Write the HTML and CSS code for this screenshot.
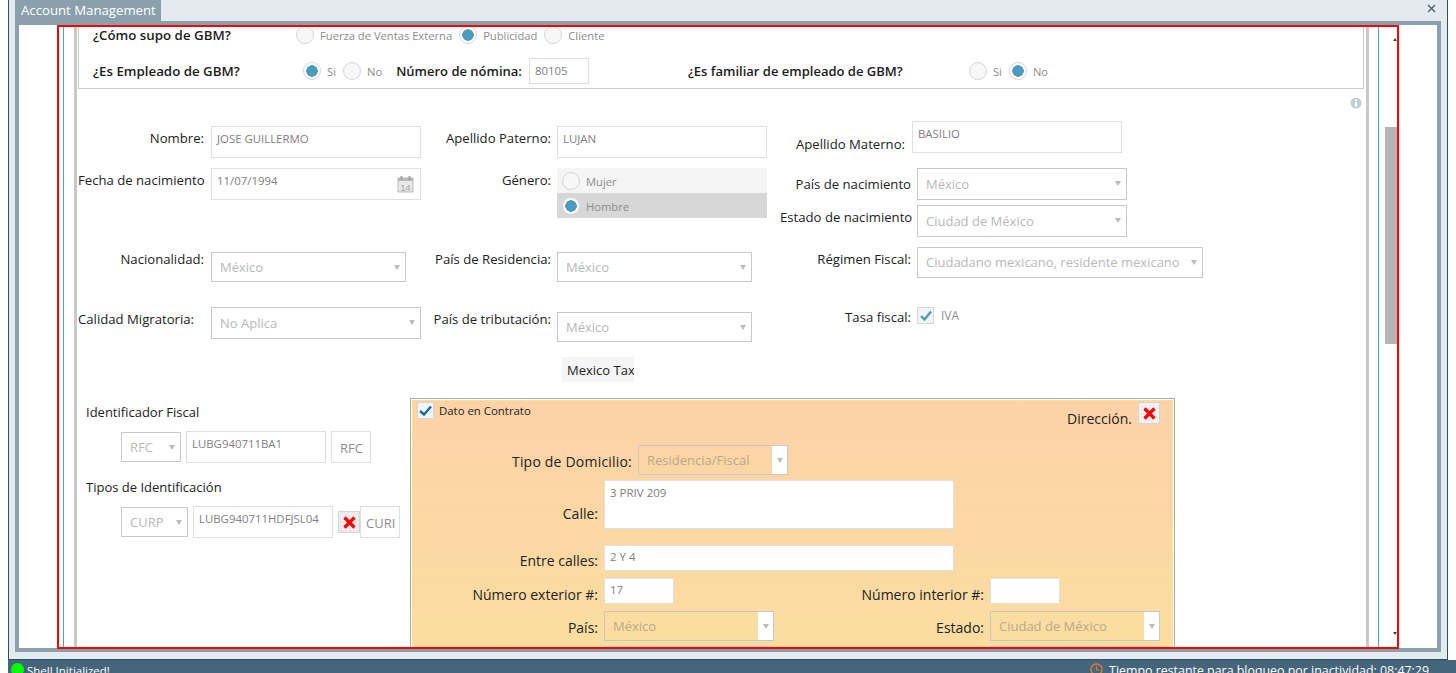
FILE: index.html
```html
<!DOCTYPE html>
<html lang="es">
<head>
    <meta charset="UTF-8">
    <title>Account Management</title>
    <link rel="stylesheet" href="styles.css">
</head>
<body>
    <div class="window">
        <div class="red-box"></div>
        <div class="tabbar">
            <div class="tab">Account Management</div>
            <svg class="close" width="9" height="9" viewBox="0 0 9 9"><path d="M1 1l7 7M8 1l-7 7" stroke="#3f6072" stroke-width="1.3" fill="none"/></svg>
        </div>
        <div class="frame">
            <div class="viewport">
                <div class="blue-box">
                    <div class="gray-box">
                        <div class="survey">
                            <div class="survey-row first">
                                <b class="q q1">¿Cómo supo de GBM?</b>
                                <span class="radio"></span><span class="opt">Fuerza de Ventas Externa</span>
                                <span class="radio on"></span><span class="opt">Publicidad</span>
                                <span class="radio"></span><span class="opt">Cliente</span>
                            </div>
                            <div class="survey-row second">
                                <b class="q q2">¿Es Empleado de GBM?</b>
                                <span class="radio on"></span><span class="opt">Si</span>
                                <span class="radio"></span><span class="opt">No</span>
                                <b class="q nomina">Número de nómina:</b>
                                <span class="input nomina-input">80105</span>
                                <b class="q familiar">¿Es familiar de empleado de GBM?</b>
                                <span class="radio"></span><span class="opt">Si</span>
                                <span class="radio on"></span><span class="opt">No</span>
                            </div>
                        </div>

                        <div class="info-row">
                            <svg width="12" height="12" viewBox="0 0 12 12"><circle cx="6" cy="6" r="5.5" fill="#c3ccd4"/><rect x="5" y="5" width="2" height="4.5" fill="#fff"/><rect x="5" y="2.5" width="2" height="1.6" fill="#fff"/></svg>
                        </div>

                        <div class="form-row row-a">
                            <div class="field col1 mt5">
                                <label class="lbl top">Nombre:</label>
                                <span class="input w210 h32">JOSE GUILLERMO</span>
                            </div>
                            <div class="field col2 mt5">
                                <label class="lbl top">Apellido Paterno:</label>
                                <span class="input w210 h32">LUJAN</span>
                            </div>
                            <div class="field col3">
                                <label class="lbl lbl-low">Apellido Materno:</label>
                                <span class="input w210 h32 materno">BASILIO</span>
                            </div>
                        </div>

                        <div class="form-row row-b">
                            <div class="field col1">
                                <label class="lbl top">Fecha de nacimiento</label>
                                <span class="input w210 h32 date">11/07/1994
                                    <svg class="cal" width="17" height="18" viewBox="0 0 17 18"><path d="M1 3h15v14H1z" fill="#e8e8e8" stroke="#b9b9b9"/><path d="M1 3h15v3H1z" fill="#b9b9b9"/><path d="M4.5 1v4M12.5 1v4" stroke="#a5a5a5" stroke-width="2"/><text x="8.5" y="15.5" text-anchor="middle" class="cal-num">14</text></svg>
                                </span>
                            </div>
                            <div class="field col2">
                                <label class="lbl top">Género:</label>
                                <div class="gender">
                                    <div class="gender-opt"><span class="radio"></span><span class="opt">Mujer</span></div>
                                    <div class="gender-opt sel"><span class="radio on"></span><span class="opt">Hombre</span></div>
                                </div>
                            </div>
                            <div class="col3 stack">
                                <div class="field">
                                    <label class="lbl mid">País de nacimiento</label>
                                    <span class="select w210 h32">México</span>
                                </div>
                                <div class="field">
                                    <label class="lbl top">Estado de nacimiento</label>
                                    <span class="select w210 h32">Ciudad de México</span>
                                </div>
                            </div>
                        </div>

                        <div class="form-row row-c">
                            <div class="field col1 mt5">
                                <label class="lbl up">Nacionalidad:</label>
                                <span class="select w195 h30">México</span>
                            </div>
                            <div class="field col2 mt5">
                                <label class="lbl up">País de Residencia:</label>
                                <span class="select w195 h30">México</span>
                            </div>
                            <div class="field col3">
                                <label class="lbl top">Régimen Fiscal:</label>
                                <span class="select w286 h31">Ciudadano mexicano, residente mexicano</span>
                            </div>
                        </div>

                        <div class="form-row row-d">
                            <div class="field col1">
                                <label class="lbl top left">Calidad Migratoria:</label>
                                <span class="select w210 h32">No Aplica</span>
                            </div>
                            <div class="field col2 mt5">
                                <label class="lbl up">País de tributación:</label>
                                <span class="select w195 h30">México</span>
                            </div>
                            <div class="field col3">
                                <label class="lbl tasa">Tasa fiscal:</label>
                                <span class="check">
                                    <svg width="12" height="11" viewBox="0 0 12 11"><path d="M1 6l3.5 3.5L11 1.5" stroke="#4b9cc0" stroke-width="2.4" fill="none"/></svg>
                                </span>
                                <span class="opt iva">IVA</span>
                            </div>
                        </div>

                        <div class="tax-row"><span class="tax">Mexico Tax</span></div>

                        <div class="bottom">
                            <div class="ids">
                                <div class="ids-title">Identificador Fiscal</div>
                                <div class="ids-row">
                                    <span class="select w60 h30 small">RFC</span>
                                    <span class="input w140 h32">LUBG940711BA1</span>
                                    <span class="id-btn">RFC</span>
                                </div>
                                <div class="ids-title t2">Tipos de Identificación</div>
                                <div class="ids-row">
                                    <span class="select w67 h30 small">CURP</span>
                                    <span class="input w140 h32">LUBG940711HDFJSL04</span>
                                    <span class="x-btn">
                                        <svg width="13" height="13" viewBox="0 0 13 13"><path d="M1.5 1.5l10 10M11.5 1.5l-10 10" stroke="#f00" stroke-width="3.2" fill="none"/></svg>
                                    </span>
                                    <span class="id-btn cut">CURI</span>
                                </div>
                            </div>

                            <div class="address">
                                <div class="address-inner">
                                    <div class="addr-head">
                                        <span class="contract">
                                            <span class="check dark">
                                                <svg width="13" height="11" viewBox="0 0 13 11"><path d="M1 6l4 3.5L12 1.5" stroke="#136f9f" stroke-width="2.4" fill="none"/></svg>
                                            </span>
                                            Dato en Contrato
                                        </span>
                                        <span class="addr-title">Dirección.</span>
                                        <span class="x-btn light">
                                            <svg width="13" height="13" viewBox="0 0 13 13"><path d="M1.5 1.5l10 10M11.5 1.5l-10 10" stroke="#f00" stroke-width="3.2" fill="none"/></svg>
                                        </span>
                                    </div>
                                    <div class="addr-row tipo">
                                        <label class="addr-lbl wide">Tipo de Domicilio:</label>
                                        <span class="addr-select w150">Residencia/Fiscal</span>
                                    </div>
                                    <div class="addr-row calle">
                                        <label class="addr-lbl">Calle:</label>
                                        <span class="addr-input w350 h49">3 PRIV 209</span>
                                    </div>
                                    <div class="addr-row entre">
                                        <label class="addr-lbl">Entre calles:</label>
                                        <span class="addr-input w350 h26">2 Y 4</span>
                                    </div>
                                    <div class="addr-row numero">
                                        <label class="addr-lbl">Número exterior #:</label>
                                        <span class="addr-input w70 h26">17</span>
                                        <label class="addr-lbl second">Número interior #:</label>
                                        <span class="addr-input w70 h26"></span>
                                    </div>
                                    <div class="addr-row pais">
                                        <label class="addr-lbl">País:</label>
                                        <span class="addr-select w170">México</span>
                                        <label class="addr-lbl second s2">Estado:</label>
                                        <span class="addr-select w170">Ciudad de México</span>
                                    </div>
                                    <div class="addr-row next">
                                        <span class="addr-select w170 offset"></span>
                                        <span class="addr-select w170 offset2"></span>
                                    </div>
                                </div>
                            </div>
                        </div>
                    </div>
                </div>
                <div class="scrollbar">
                    <span class="arrow up"></span>
                    <span class="thumb"></span>
                    <span class="arrow down"></span>
                </div>
            </div>
        </div>
    </div>
    <div class="statusbar">
        <span class="led"></span>
        <span class="status-text">Shell Initialized!</span>
        <span class="timer">
            <svg width="13" height="13" viewBox="0 0 13 13"><circle cx="6.5" cy="6.5" r="5.5" fill="none" stroke="#e07b30" stroke-width="1.4"/><path d="M6.5 3v4h3" fill="none" stroke="#e07b30" stroke-width="1.2"/></svg>
            Tiempo restante para bloqueo por inactividad: 08:47:29
        </span>
    </div>
</body>
</html>
```

FILE: styles.css
```css
* {
    box-sizing: border-box;
}

html, body {
    margin: 0;
    height: 673px;
    overflow: hidden;
    background-color: #fff;
    font-family: "Open Sans", "Noto Sans", sans-serif;
    font-size: 12px;
    color: #222;
}

/* window chrome */
.window {
    position: relative;
    margin-left: 8px;
    width: 1440px;
    height: 660px;
    padding: 0 6px 7px 6px;
    background-color: #e3eaf0;
    border-left: 1px solid #2f4f60;
    border-right: 1px solid #2f4f60;
    border-bottom: 1px solid #2f4f60;
    display: flex;
    flex-direction: column;
}

.tabbar {
    height: 21px;
    flex: none;
    display: flex;
    justify-content: space-between;
    align-items: flex-start;
}

.tab {
    width: 146px;
    height: 21px;
    background-color: #8aa0ad;
    color: #fff;
    font-size: 13.2px;
    line-height: 21px;
    padding-left: 6px;
    white-space: nowrap;
}

.close {
    margin: 4px 5px 0 0;
}

.frame {
    flex: 1;
    border: 4px solid #8aa0ad;
    background-color: #fff;
    overflow: hidden;
    min-height: 0;
}

.red-box {
    position: absolute;
    left: 48px;
    top: 25px;
    width: 1342px;
    height: 624px;
    border: 2px solid #f00;
    z-index: 5;
}

.viewport {
    display: flex;
    align-items: stretch;
    height: 100%;
    padding-left: 44px;
    overflow: hidden;
}

.blue-box {
    width: 1316px;
    flex: none;
    height: 100%;
    padding-left: 10px;
    padding-right: 9px;
    border-left: 1px solid #3ba7dc;
    border-right: 1px solid #3ba7dc;
    overflow: hidden;
}

.gray-box {
    min-height: 100%;
    border-left: 3px solid #c8c8c8;
    border-right: 3px solid #c8c8c8;
    padding: 0 0 0 1px;
}

.scrollbar {
    width: 12px;
    margin-left: 6px;
    position: relative;
    display: flex;
    flex-direction: column;
    align-items: flex-end;
}

.thumb {
    width: 12px;
    height: 217px;
    margin-top: 102px;
    background-color: #b5b5b5;
}

.arrow {
    position: absolute;
    right: 0;
    width: 0;
    height: 0;
    border-left: 2px solid transparent;
    border-right: 2px solid transparent;
}

.arrow.up {
    top: 13px;
    border-bottom: 3px solid #444;
}

.arrow.down {
    top: 607px;
    border-top: 3px solid #444;
}

/* survey panel */
.survey {
    width: 1286px;
    height: 64px;
    border: 1px solid #ccc;
    border-top: none;
}

.survey-row {
    display: flex;
    align-items: center;
    white-space: nowrap;
}

.survey-row.first {
    height: 20px;
}

.survey-row.second {
    height: 32px;
    margin-top: 10px;
}

.q {
    font-size: 13px;
    font-weight: 600;
    color: #1c1c1c;
}

.q1 {
    width: 203px;
    margin-left: 14px;
    font-size: 13.3px;
}

.q2 {
    width: 210px;
    margin-left: 14px;
    font-size: 13.3px;
}

.nomina {
    margin-left: 7px;
    margin-right: 7px;
}

.nomina-input {
    width: 60px;
    height: 26px;
    margin-right: 99px;
}

.familiar {
    width: 281px;
}

.radio {
    display: inline-block;
    flex: none;
    width: 18px;
    height: 18px;
    border-radius: 50%;
    border: 1px solid #d6d6d6;
    background-color: #f7f7f7;
    margin-right: 6px;
}

.radio.on {
    background: radial-gradient(circle, #4d9bc1 0, #4d9bc1 5.5px, #fff 6px);
}

.opt {
    font-size: 11.2px;
    color: #8c8c8c;
    margin-right: 7px;
}

.info-row {
    display: flex;
    justify-content: flex-end;
    height: 12px;
    margin-top: 8px;
    padding-right: 4px;
}

/* form rows */
.form-row {
    display: flex;
    align-items: flex-start;
    width: 1287px;
}

.row-a {
    margin-top: 12px;
}

.row-b {
    margin-top: 10px;
}

.row-c {
    margin-top: 10px;
}

.row-d {
    margin-top: 25px;
}

.field {
    display: flex;
    align-items: flex-start;
    white-space: nowrap;
}

.col1 {
    width: 347px;
}

.col2 {
    width: 355px;
}

.col3 {
    width: 480px;
}

.mt5 {
    margin-top: 5px;
}

.stack {
    display: flex;
    flex-direction: column;
    gap: 5px;
}

.lbl {
    font-size: 13.15px;
    line-height: 18px;
    color: #222;
    text-align: right;
    width: 126px;
    margin-right: 7px;
    flex: none;
}

.col2 .lbl {
    margin-right: 6px;
}

.col3 .lbl {
    width: 131px;
    margin-right: 6px;
}

.lbl.top {
    margin-top: 3px;
}

.lbl.up {
    margin-top: -2px;
}

.lbl.tasa {
    margin-top: 1px;
}

.lbl.mid {
    margin-top: 7px;
}

.col3 .lbl.lbl-low {
    width: 125px;
    margin-top: 14px;
    margin-right: 7px;
}

.lbl.left {
    text-align: left;
    margin-top: 3px;
}

.input, .select {
    display: inline-block;
    flex: none;
    background-color: #fff;
    color: #808080;
    white-space: nowrap;
    overflow: hidden;
}

.input {
    border: 1px solid #dfdfdf;
    font-size: 11.4px;
    padding: 4px 5px;
    line-height: 16px;
}

.select {
    position: relative;
    border: 1px solid #c8c8c8;
    font-size: 13px;
    color: #b8b8b8;
    padding: 0 8px;
    line-height: 28px;
}

.select::after {
    content: "";
    position: absolute;
    right: 5px;
    top: 12px;
    border-left: 3px solid transparent;
    border-right: 3px solid transparent;
    border-top: 5px solid #bbb;
}

.h32 {
    height: 32px;
}

.select.h32 {
    line-height: 30px;
}

.h30 {
    height: 30px;
}

.h31 {
    height: 31px;
}

.w60 { width: 60px; }
.w67 { width: 67px; }
.w70 { width: 70px; }
.w140 { width: 140px; }
.w150 { width: 150px; }
.w170 { width: 170px; }
.w195 { width: 195px; }
.w210 { width: 210px; }
.w286 { width: 286px; }
.w350 { width: 350px; }

.date {
    position: relative;
}

.cal {
    position: absolute;
    right: 6px;
    top: 6px;
}

.cal-num {
    font-family: "Liberation Sans", sans-serif;
    font-size: 9px;
    fill: #a5a5a5;
}

.gender {
    width: 210px;
}

.gender-opt {
    height: 25px;
    display: flex;
    align-items: center;
    padding: 1px 0 0 5px;
    background-color: #f5f5f5;
}

.gender-opt.sel {
    background-color: #d7d7d7;
}

.gender-opt .radio {
    margin-right: 6px;
}

.check {
    display: inline-flex;
    align-items: center;
    justify-content: center;
    flex: none;
    width: 17px;
    height: 17px;
    border: 1px solid #d6d6d6;
    background-color: #f4f4f4;
}

.iva {
    margin-left: 7px;
    margin-top: 1px;
    font-size: 12px;
    line-height: 16px;
}

.tax-row {
    padding-left: 484px;
    margin-top: 15px;
}

.tax {
    display: block;
    width: 72px;
    height: 25px;
    background-color: #f5f5f5;
    color: #222;
    font-size: 13px;
    line-height: 27px;
    padding-left: 5px;
    white-space: nowrap;
    overflow: hidden;
}

/* bottom part */
.bottom {
    display: flex;
    margin-top: 16px;
}

.ids {
    width: 332px;
    flex: none;
}

.ids-title {
    font-size: 13px;
    line-height: 18px;
    margin-top: 5px;
    margin-left: 8px;
}

.ids-title.t2 {
    margin-top: 15px;
}

.ids-row {
    display: flex;
    align-items: center;
    gap: 5px;
    margin-top: 10px;
    margin-left: 43px;
    height: 32px;
}

.select.small {
    font-size: 13px;
}

.id-btn {
    width: 40px;
    height: 32px;
    flex: none;
    border: 1px solid #dfdfdf;
    background-color: #fff;
    color: #8c8c8c;
    font-size: 13px;
    line-height: 32px;
    padding-left: 8px;
    overflow: hidden;
    white-space: nowrap;
}

.id-btn.cut {
    margin-left: -5px;
    padding-left: 5px;
}

.x-btn {
    display: inline-flex;
    align-items: center;
    justify-content: center;
    flex: none;
    width: 22px;
    height: 22px;
    background-color: #ececec;
    border: 1px solid #d6d6d6;
}

/* address card */
.address {
    width: 765px;
    height: 300px;
    flex: none;
    border: 1px solid #aaa;
    background-color: #fff;
    padding: 1px 1px 0 1px;
}

.address-inner {
    height: 100%;
    border: 1px solid #fbe08f;
    background: linear-gradient(#fdd2a7, #fbe09f);
}

.addr-head {
    display: flex;
    align-items: flex-start;
    height: 44px;
    padding: 1px 12px 0 4px;
}

.contract {
    display: flex;
    align-items: center;
    gap: 5px;
    font-size: 11.4px;
    flex: 1;
}

.contract .check {
    background-color: #f3f3f3;
}

.addr-title {
    font-size: 14px;
    line-height: 20px;
    margin-top: 7px;
    margin-right: 6px;
}

.addr-head .x-btn {
    background-color: #f1f1f1;
}

.addr-row {
    display: flex;
    align-items: center;
    white-space: nowrap;
}

.addr-lbl {
    font-size: 14px;
    color: #222;
    width: 185px;
    margin-right: 6px;
    text-align: right;
    flex: none;
}

.addr-lbl.wide {
    width: 219px;
    letter-spacing: 0.2px;
    margin-top: 2px;
}

.addr-lbl.second {
    width: 310px;
}

.addr-lbl.s2 {
    width: 210px;
}

.calle .addr-lbl {
    margin-top: 18px;
}

.entre .addr-lbl {
    margin-top: 4px;
}

.numero .addr-lbl {
    margin-top: 6px;
}

.pais .addr-lbl {
    margin-top: 3px;
}

.addr-input, .addr-select {
    display: inline-block;
    flex: none;
    overflow: hidden;
}

.addr-input {
    background-color: #fff;
    border: 1px solid #dfdfdf;
    color: #808080;
    font-size: 11.5px;
    line-height: 14px;
    padding: 4px 5px;
}

.calle .addr-input {
    padding-top: 5px;
}

.h26 {
    height: 26px;
}

.h49 {
    height: 49px;
}

.addr-select {
    height: 30px;
    position: relative;
    border: 1px solid #c8c8c8;
    color: #b8a98c;
    font-size: 13px;
    line-height: 28px;
    padding-left: 8px;
    box-shadow: inset -15px 0 0 #fff;
}

.addr-select::after {
    content: "";
    position: absolute;
    right: 4px;
    top: 12px;
    border-left: 3px solid transparent;
    border-right: 3px solid transparent;
    border-top: 5px solid #bbb;
}

.calle {
    margin-top: 5px;
}

.entre {
    margin-top: 16px;
}

.numero {
    margin-top: 7px;
}

.pais {
    margin-top: 7px;
}

.next {
    margin-top: 5px;
}

.offset {
    margin-left: 191px;
}

.offset2 {
    margin-left: 216px;
}

/* status bar */
.statusbar {
    margin-left: 8px;
    height: 13px;
    background-color: #45667a;
    color: #fff;
    display: flex;
    align-items: flex-start;
    padding-left: 3px;
    font-size: 12px;
    line-height: 22px;
    overflow: hidden;
    white-space: nowrap;
}

.led {
    width: 13px;
    height: 13px;
    margin-top: 3px;
    border-radius: 50%;
    background-color: #0f0;
    flex: none;
}

.status-text {
    margin-left: 3px;
    flex: 1;
    font-size: 11.5px;
}

.timer {
    display: flex;
    align-items: flex-start;
    gap: 6px;
    padding-right: 27px;
    font-size: 12.4px;
}

.timer svg {
    margin-top: 3px;
}
```
